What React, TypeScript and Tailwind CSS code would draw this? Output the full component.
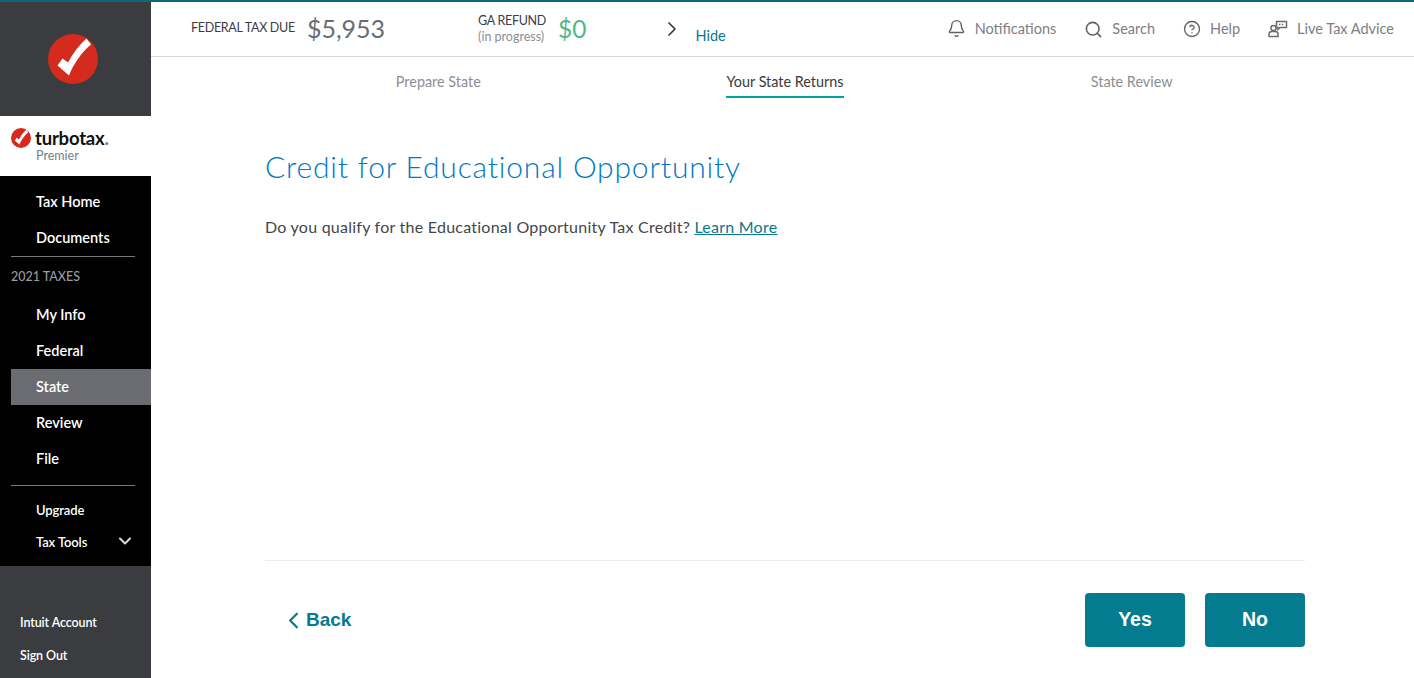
import { Bell, ChevronDown, ChevronLeft, ChevronRight, CircleHelp, Search } from 'lucide-react'

const font = { lato: "font-['Lato','Noto_Sans',sans-serif]" }

function Check({ size }: { size: number }) {
  return (
    <svg width={size} height={size} viewBox="0 0 50 50" className="shrink-0">
      <circle cx="25" cy="25" r="25" fill="#d52b1e" />
      <path d="M9.5 31.5 L21 41.5 C25.5 30 33 19 43 10.5 L38.5 4.5 C31 11 25 19 20 28.5 L14.5 24.5 Z" fill="#fff" />
    </svg>
  )
}

function NavItem({ label, active, small }: { label: string; active?: boolean; small?: boolean }) {
  return (
    <div
      className={`ml-[11px] flex items-center pl-[25px] font-semibold text-white ${small ? 'h-8 text-[13px] tracking-[-0.1px]' : 'h-9 text-[14.5px]'} ${active ? 'bg-[#6b6c72]' : ''}`}
    >
      {label}
    </div>
  )
}

function Sidebar() {
  return (
    <aside className="flex w-[151px] shrink-0 flex-col">
      <div className="flex h-[114px] items-center justify-center bg-[#3b3c40] pr-[5px]">
        <Check size={50} />
      </div>
      <div className="flex h-[60px] flex-col bg-white pl-[11px] pt-[12px]">
        <div className="flex h-5 items-center gap-[4px]">
          <Check size={20} />
          <span className="text-[18.5px] font-bold leading-5 tracking-[-0.2px] text-[#111]">
            turbotax<span className="text-[#777]">.</span>
          </span>
        </div>
        <div className="pl-[25px] text-[12.5px] leading-[16px] text-[#6d7f92]">Premier</div>
      </div>
      <nav className="flex h-[390px] flex-col bg-black pt-2">
        <NavItem label="Tax Home" />
        <NavItem label="Documents" />
        <div className="ml-[11px] mr-4 border-t border-[#77787c]" />
        <div className="flex h-[40px] items-center pl-[11px] text-[12.5px] font-medium text-[#9a9b9f]">2021 TAXES</div>
        <NavItem label="My Info" />
        <NavItem label="Federal" />
        <NavItem label="State" active />
        <NavItem label="Review" />
        <NavItem label="File" />
        <div className="ml-[11px] mr-4 mt-2 border-t border-[#77787c]" />
        <div className="mt-[9px]">
          <NavItem label="Upgrade" small />
          <div className="relative">
            <NavItem label="Tax Tools" small />
            <ChevronDown size={20} strokeWidth={2.5} className="absolute right-[16px] top-[4px] text-[#d8d8d8]" />
          </div>
        </div>
      </nav>
      <div className="flex flex-1 flex-col bg-[#3b3c40] pl-5 pt-[41px] text-[12.5px] font-semibold tracking-[-0.1px] text-white">
        <div className="flex h-[33px] items-center">Intuit Account</div>
        <div className="flex h-[33px] items-center">Sign Out</div>
      </div>
    </aside>
  )
}

function LiveAdvice() {
  return (
    <svg width="20" height="18" viewBox="0 0 20 18" fill="none" stroke="#6b6c72" strokeWidth="1.5">
      <path d="M8.5 1.5 H18.5 V7.5 H12 L10 9.5 V7.5 H8.5 Z" />
      <circle cx="5.5" cy="8" r="2.6" />
      <path d="M1 16.5 V14 C1 12.5 2.5 11.5 4 11.5 H7 C8.5 11.5 10 12.5 10 14 V16.5 Z" />
      <path d="M11 4.5 H16" strokeDasharray="1.4 1.4" />
    </svg>
  )
}

function TopAction({ icon, label, className }: { icon: React.ReactNode; label: string; className?: string }) {
  return (
    <div className={`flex items-center gap-[9px] text-[14.5px] text-[#7d7e84] ${className ?? ''}`}>
      <span className="text-[#5f6066]">{icon}</span>
      <span>{label}</span>
    </div>
  )
}

function TopBar() {
  return (
    <header className="flex h-[55px] shrink-0 items-center border-b border-[#d8d9db] pl-10 pr-5">
      <span className="mt-[-2px] text-[12.5px] tracking-[-0.3px] text-[#3c3c46]">FEDERAL TAX DUE</span>
      <span className="ml-3 text-[25px] text-[#6b6c72]">$5,953</span>
      <div className="ml-[93px] flex flex-col items-start text-[12.5px] leading-[16px]">
        <span className="tracking-[-0.3px] text-[#3c3c46]">GA REFUND</span>
        <span className="text-[#8d8e94]">(in progress)</span>
      </div>
      <span className="ml-3 text-[24.5px] text-[#52b788]">$0</span>
      <ChevronRight size={24} strokeWidth={1.75} className="ml-[74px] text-[#393a3d]" />
      <span className="ml-[11px] mt-[13px] text-[14.5px] text-[#08788c]">Hide</span>
      <div className="ml-auto flex items-center gap-7">
        <TopAction icon={<Bell size={19} strokeWidth={1.75} />} label="Notifications" className="mt-[-1px]" />
        <TopAction icon={<Search size={19} strokeWidth={2} />} label="Search" />
        <TopAction icon={<CircleHelp size={18} strokeWidth={1.75} />} label="Help" />
        <TopAction icon={<LiveAdvice />} label="Live Tax Advice" />
      </div>
    </header>
  )
}

function Tabs() {
  return (
    <div className="grid h-[41px] shrink-0 grid-cols-3 text-[14.4px] text-[#8d8e94]">
      <div className="flex justify-center pt-[14px]">Prepare State</div>
      <div className="flex justify-center">
        <div className="h-[41px] border-b-2 border-[#00a6a4] pt-[14px] text-[#393a3d]">Your State Returns</div>
      </div>
      <div className="flex justify-center pt-[14px]">State Review</div>
    </div>
  )
}

export default function App() {
  return (
    <div className={`flex h-[678px] flex-col overflow-hidden bg-white ${font.lato}`}>
      <div className="h-[2px] bg-[#0a6878]" />
      <div className="flex min-h-0 flex-1">
        <Sidebar />
        <main className="flex min-w-0 flex-1 flex-col">
          <TopBar />
          <div className="flex flex-1 flex-col pl-[114px] pr-[109px]">
            <Tabs />
            <h1 className="mt-[45px] text-[30px] font-light leading-[46px] tracking-[0.81px] text-[#0077c5]">
              Credit for Educational Opportunity
            </h1>
            <p className="mt-[26px] text-[16px] leading-6 tracking-[0.245px] text-[#45464a]">
              Do you qualify for the Educational Opportunity Tax Credit?{' '}
              <a className="text-[#08788c] underline">Learn More</a>
            </p>
            <div className="mt-[321px] flex flex-1 items-start justify-between border-t border-[#e9eaeb] pt-8 font-['Liberation_Sans',Arial,sans-serif]">
              <div className="ml-[18px] flex h-[54px] items-center pt-[1px] text-[19px] font-bold text-[#047b8e]">
                <ChevronLeft size={27} strokeWidth={2} className="ml-[-3px] mr-[-3px]" />
                <span className="ml-[2px]">Back</span>
              </div>
              <div className="flex gap-5">
                <button className="h-[54px] w-[100px] rounded-[4px] bg-[#047b8e] text-[19.5px] font-bold text-white">Yes</button>
                <button className="h-[54px] w-[100px] rounded-[4px] bg-[#047b8e] text-[19.5px] font-bold text-white">No</button>
              </div>
            </div>
          </div>
        </main>
      </div>
    </div>
  )
}
